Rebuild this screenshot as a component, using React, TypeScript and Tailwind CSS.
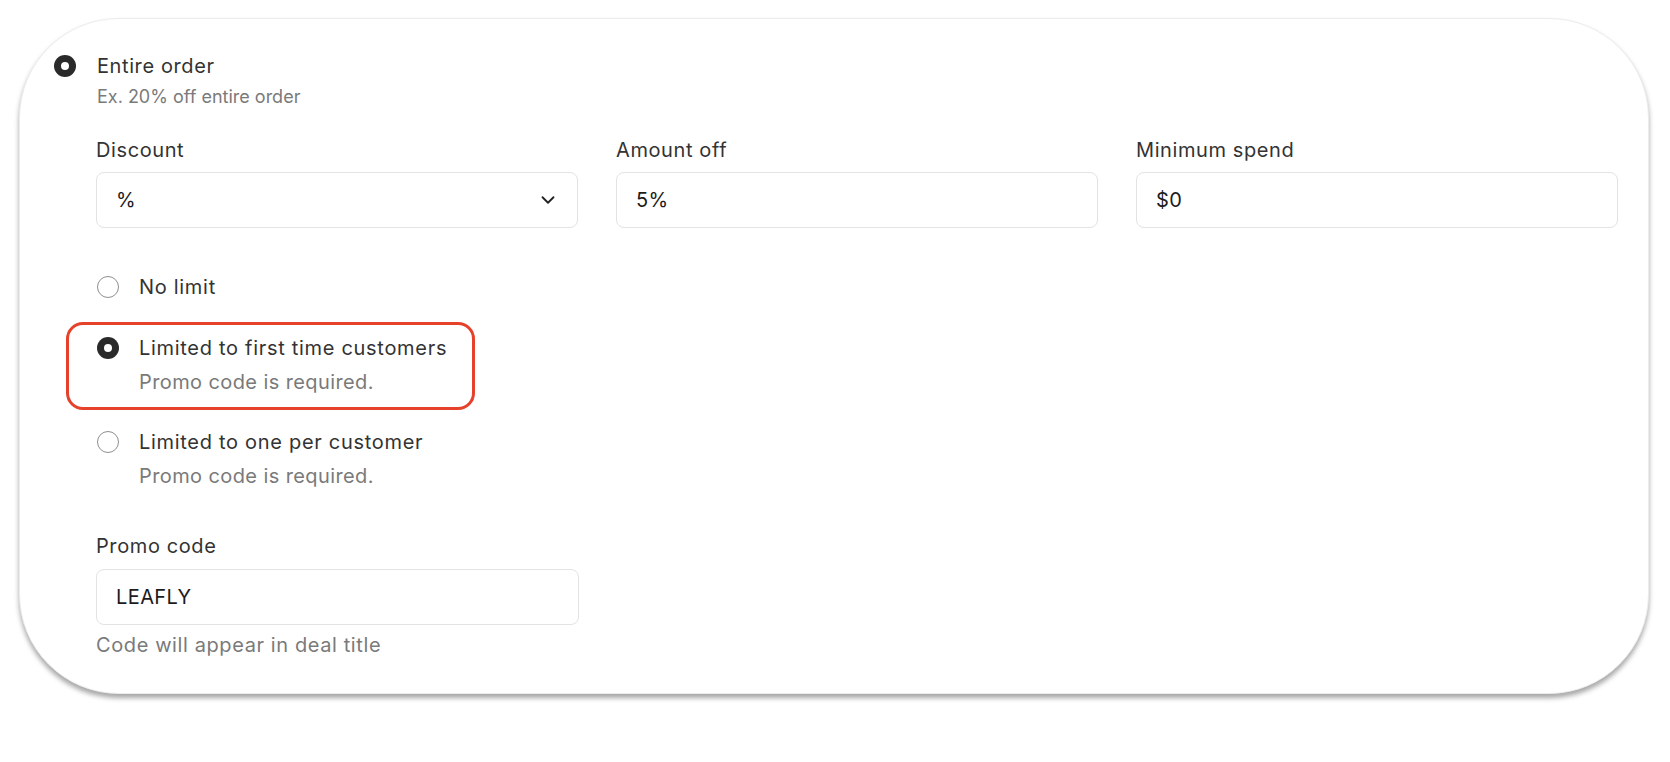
import React from "react";
import { ChevronDown } from "lucide-react";

type RadioProps = { checked?: boolean; className?: string };

const Radio = ({ checked, className }: RadioProps) =>
  checked ? (
    <span
      className={`flex h-[22px] w-[22px] shrink-0 items-center justify-center rounded-full bg-[#2a2a2a] ${className ?? ""}`}
    >
      <span className="h-[8px] w-[8px] rounded-full bg-white" />
    </span>
  ) : (
    <span
      className={`h-[22px] w-[22px] shrink-0 rounded-full border-[1.5px] border-[#8f8f8f] bg-white ${className ?? ""}`}
    />
  );

const Field = ({ label, value, select }: { label: string; value: string; select?: boolean }) => (
  <div className="flex flex-col">
    <label className="text-[20px] leading-[24px] tracking-[0.6px] text-[#333]">{label}</label>
    <div className="mt-[10px] flex h-[56px] items-center justify-between rounded-[8px] border border-[#e3e3e3] bg-white pl-[19px] pr-[18px] text-[20px] tracking-[0.4px] text-[#1c1c1c]">
      <span>{value}</span>
      {select && <ChevronDown size={22} strokeWidth={2} className="text-[#222]" />}
    </div>
  </div>
);

const Option = ({
  title,
  sub,
  checked,
  highlight,
  className,
}: {
  title: string;
  sub?: string;
  checked?: boolean;
  highlight?: boolean;
  className?: string;
}) => (
  <div className={`relative flex items-start gap-[20px] ${className ?? ""}`}>
    {highlight && (
      <div className="pointer-events-none absolute -top-[14px] -left-[31px] h-[88px] w-[409px] rounded-[17px] border-[3px] border-[#e6412a]" />
    )}
    <Radio checked={checked} className="mt-[1px]" />
    <div className="flex flex-col">
      <span className="text-[20px] leading-[24px] tracking-[0.7px] text-[#333]">{title}</span>
      {sub && (
        <span className="mt-[10px] text-[20px] leading-[24px] tracking-[0.4px] text-[#7a7a7a]">{sub}</span>
      )}
    </div>
  </div>
);

export default function App() {
  return (
    <div className="min-h-screen bg-white pl-[19px] pt-[18px] font-['Inter',sans-serif]">
      <div className="h-[676px] w-[1630px] rounded-[100px] border border-[#ececec] bg-white pl-[34px] pr-[30px] pt-[34px] shadow-[0_4px_5px_rgba(0,0,0,0.35)]">
        <div className="flex items-start gap-[21px]">
          <Radio checked className="mt-[2px]" />
          <div className="flex flex-col">
            <span className="text-[20px] leading-[26px] tracking-[0.6px] text-[#333]">Entire order</span>
            <span className="mt-[7px] text-[18px] leading-[22px] text-[#7a7a7a]">Ex. 20% off entire order</span>
          </div>
        </div>

        <div className="pl-[42px]">
          <div className="mt-[30px] grid grid-cols-3 gap-[38px]">
            <Field label="Discount" value="%" select />
            <Field label="Amount off" value="5%" />
            <Field label="Minimum spend" value="$0" />
          </div>

          <div className="mt-[47px] flex flex-col pl-[1px]">
            <Option title="No limit" />
            <Option
              className="mt-[37px]"
              title="Limited to first time customers"
              sub="Promo code is required."
              checked
              highlight
            />
            <Option className="mt-[36px]" title="Limited to one per customer" sub="Promo code is required." />
          </div>

          <div className="mt-[46px] flex w-[483px] flex-col">
            <label className="text-[20px] leading-[24px] tracking-[0.6px] text-[#333]">Promo code</label>
            <div className="mt-[11px] flex h-[56px] items-center rounded-[8px] border border-[#e3e3e3] bg-white pl-[19px] text-[20px] tracking-[0.4px] text-[#1c1c1c]">
              LEAFLY
            </div>
            <span className="mt-[9px] text-[20px] leading-[22px] tracking-[0.6px] text-[#7a7a7a]">
              Code will appear in deal title
            </span>
          </div>
        </div>
      </div>
    </div>
  );
}
